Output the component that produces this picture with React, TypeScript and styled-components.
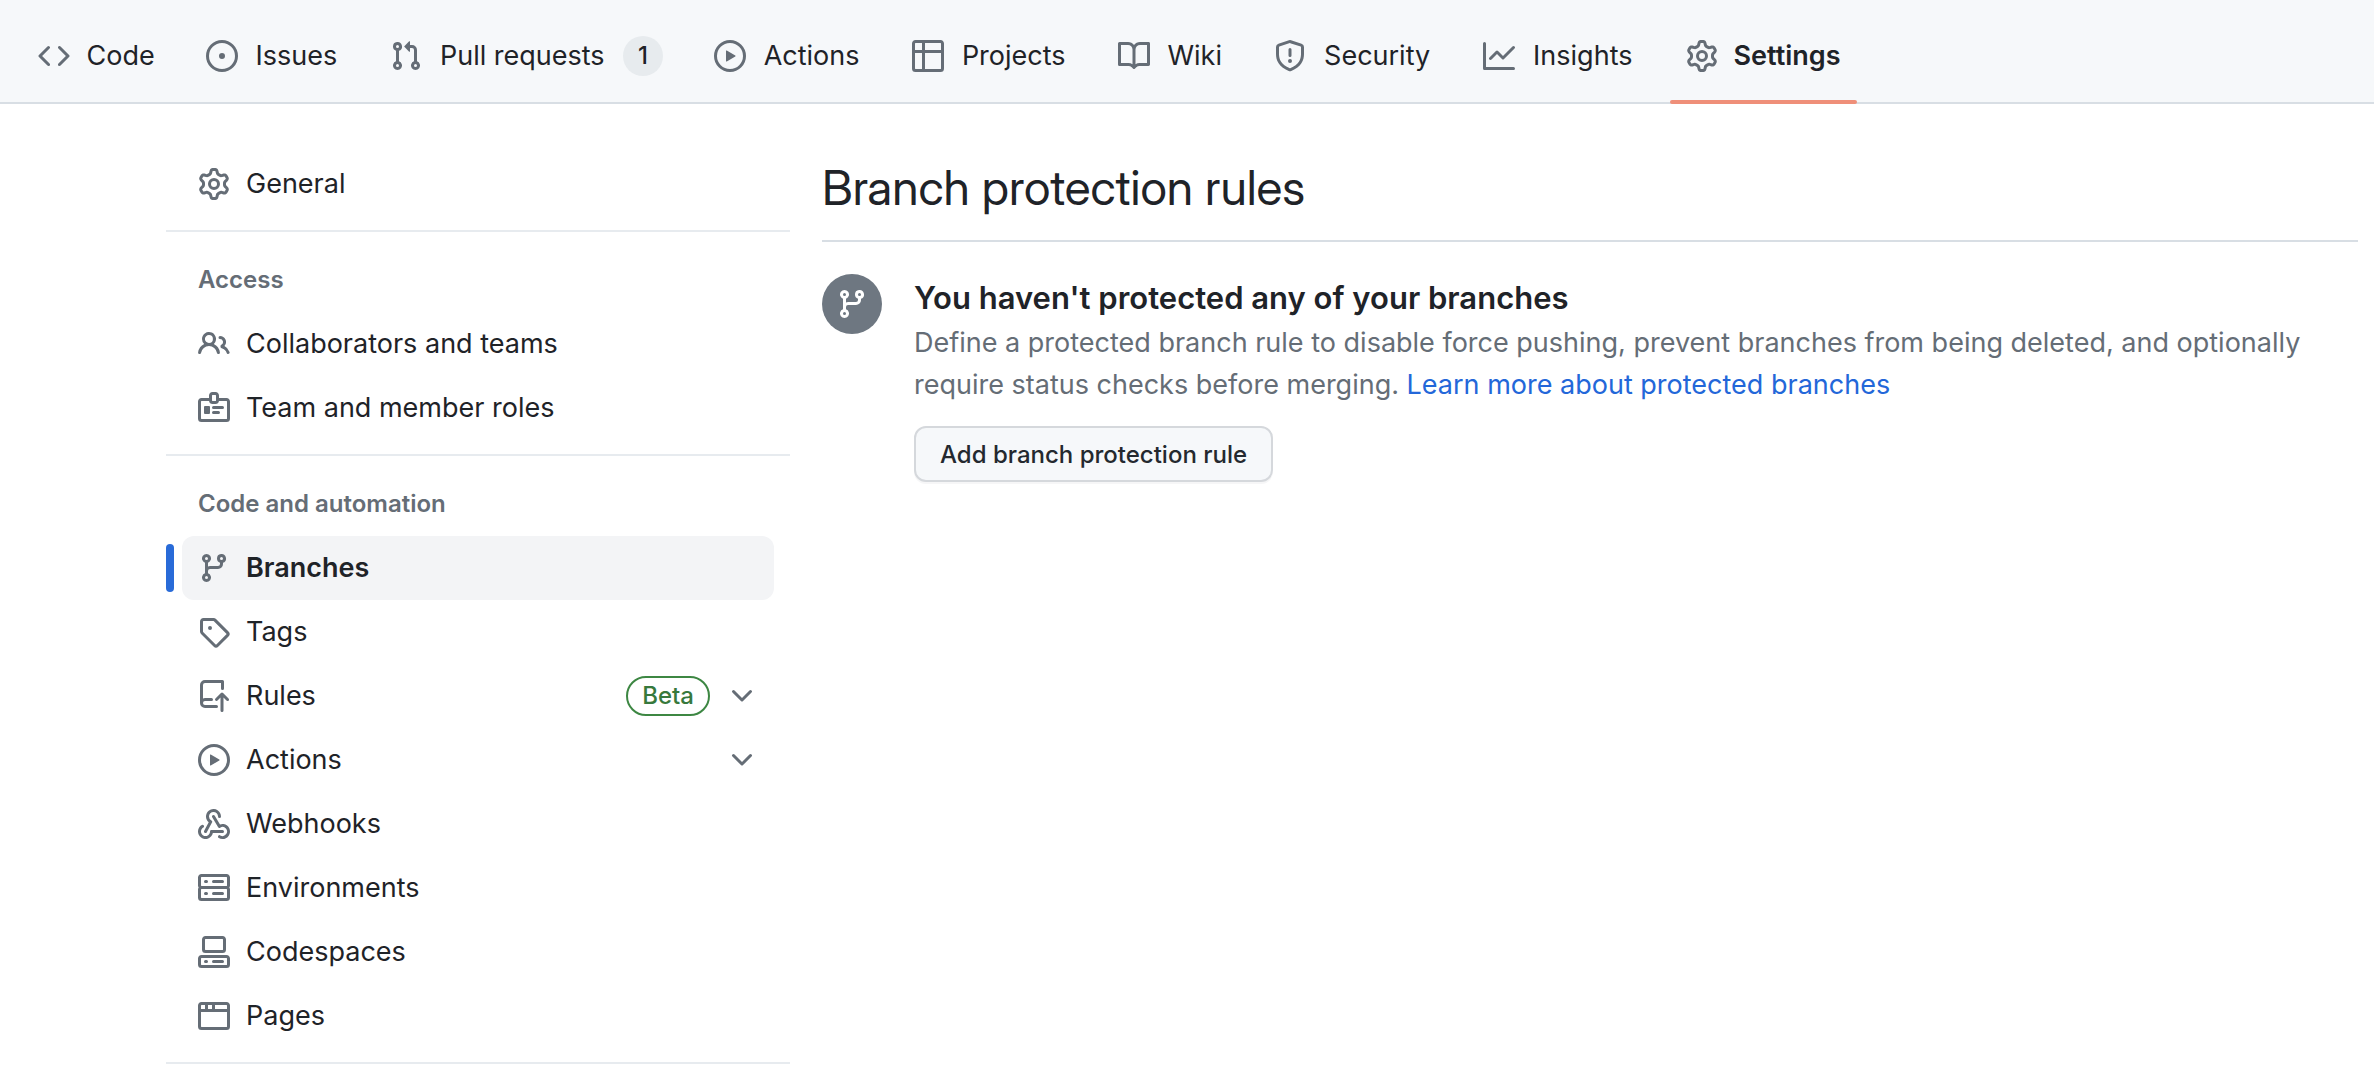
import React from "react";
import styled, { createGlobalStyle } from "styled-components";

const ICONS = {
  code: "m11.28 3.22 4.25 4.25a.75.75 0 0 1 0 1.06l-4.25 4.25a.749.749 0 0 1-1.275-.326.749.749 0 0 1 .215-.734L13.94 8l-3.72-3.72a.749.749 0 0 1 .326-1.275.749.749 0 0 1 .734.215Zm-6.56 0a.751.751 0 0 1 1.042.018.751.751 0 0 1 .018 1.042L2.06 8l3.72 3.72a.749.749 0 0 1-.326 1.275.749.749 0 0 1-.734-.215L.47 8.53a.75.75 0 0 1 0-1.06Z",
  issue: "M8 9.5a1.5 1.5 0 1 0 0-3 1.5 1.5 0 0 0 0 3ZM8 0a8 8 0 1 1 0 16A8 8 0 0 1 8 0ZM1.5 8a6.5 6.5 0 1 0 13 0 6.5 6.5 0 0 0-13 0Z",
  pull: "M1.5 3.25a2.25 2.25 0 1 1 3 2.122v5.256a2.251 2.251 0 1 1-1.5 0V5.372A2.25 2.25 0 0 1 1.5 3.25Zm5.677-.177L9.573.677A.25.25 0 0 1 10 .854V2.5h1A2.5 2.5 0 0 1 13.5 5v5.628a2.251 2.251 0 1 1-1.5 0V5a1 1 0 0 0-1-1h-1v1.646a.25.25 0 0 1-.427.177L7.177 3.427a.25.25 0 0 1 0-.354ZM3.75 2.5a.75.75 0 1 0 0 1.5.75.75 0 0 0 0-1.5Zm0 9.5a.75.75 0 1 0 0 1.5.75.75 0 0 0 0-1.5Zm8.25.75a.75.75 0 1 0 1.5 0 .75.75 0 0 0-1.5 0Z",
  play: "M8 0a8 8 0 1 1 0 16A8 8 0 0 1 8 0ZM1.5 8a6.5 6.5 0 1 0 13 0 6.5 6.5 0 0 0-13 0Zm4.879-2.773 4.264 2.559a.25.25 0 0 1 0 .428l-4.264 2.559A.25.25 0 0 1 6 10.559V5.442a.25.25 0 0 1 .379-.215Z",
  table: "M0 1.75C0 .784.784 0 1.75 0h12.5C15.216 0 16 .784 16 1.75v12.5A1.75 1.75 0 0 1 14.25 16H1.75A1.75 1.75 0 0 1 0 14.25ZM6.5 6.5v8h7.75a.25.25 0 0 0 .25-.25V6.5Zm8-1.5V1.75a.25.25 0 0 0-.25-.25H6.5V5Zm-13 1.5v7.75c0 .138.112.25.25.25H5v-8ZM5 5V1.5H1.75a.25.25 0 0 0-.25.25V5Z",
  book: "M0 1.75A.75.75 0 0 1 .75 1h4.253c1.227 0 2.317.59 3 1.501A3.743 3.743 0 0 1 11.006 1h4.245a.75.75 0 0 1 .75.75v10.5a.75.75 0 0 1-.75.75h-4.507a2.25 2.25 0 0 0-1.591.659l-.622.621a.75.75 0 0 1-1.06 0l-.622-.621A2.25 2.25 0 0 0 5.258 13H.75a.75.75 0 0 1-.75-.75Zm7.251 10.324.004-5.073-.002-2.253A2.25 2.25 0 0 0 5.003 2.5H1.5v9h3.757a3.75 3.75 0 0 1 1.994.574ZM8.755 4.75l-.004 7.322a3.752 3.752 0 0 1 1.992-.572H14.5v-9h-3.495a2.25 2.25 0 0 0-2.25 2.25Z",
  shield: "M7.467.133a1.748 1.748 0 0 1 1.066 0l5.25 1.68A1.75 1.75 0 0 1 15 3.48V7c0 1.566-.32 3.182-1.303 4.682-.983 1.498-2.585 2.813-5.032 3.855a1.697 1.697 0 0 1-1.33 0c-2.447-1.042-4.049-2.357-5.032-3.855C1.32 10.182 1 8.566 1 7V3.48a1.75 1.75 0 0 1 1.217-1.667Zm.61 1.429a.25.25 0 0 0-.153 0l-5.25 1.68a.25.25 0 0 0-.174.238V7c0 1.358.275 2.666 1.057 3.86.784 1.194 2.121 2.34 4.366 3.297a.196.196 0 0 0 .154 0c2.245-.956 3.582-2.104 4.366-3.298C13.225 9.666 13.5 8.36 13.5 7V3.48a.251.251 0 0 0-.174-.237l-5.25-1.68ZM8.75 4.75v3a.75.75 0 0 1-1.5 0v-3a.75.75 0 0 1 1.5 0ZM9 10.5a1 1 0 1 1-2 0 1 1 0 0 1 2 0Z",
  graph: "M1.5 1.75V13.5h13.75a.75.75 0 0 1 0 1.5H.75a.75.75 0 0 1-.75-.75V1.75a.75.75 0 0 1 1.5 0Zm14.28 2.53-5.25 5.25a.75.75 0 0 1-1.06 0L7 7.06 4.28 9.78a.751.751 0 0 1-1.042-.018.751.751 0 0 1-.018-1.042l3.25-3.25a.75.75 0 0 1 1.06 0L10 7.94l4.72-4.72a.751.751 0 0 1 1.042.018.751.751 0 0 1 .018 1.042Z",
  gear: "M8 0a8.2 8.2 0 0 1 .701.031C9.444.095 9.99.645 10.16 1.29l.288 1.107c.018.066.079.158.212.224.231.114.454.243.668.386.123.082.233.09.299.071l1.103-.303c.644-.176 1.392.021 1.82.63.27.385.506.792.704 1.218.315.675.111 1.422-.364 1.891l-.814.806c-.049.048-.098.147-.088.294.016.257.016.515 0 .772-.01.147.038.246.088.294l.814.806c.475.469.679 1.216.364 1.891a7.977 7.977 0 0 1-.704 1.217c-.428.61-1.176.807-1.82.63l-1.102-.302c-.067-.019-.177-.011-.3.071a5.909 5.909 0 0 1-.668.386c-.133.066-.194.158-.211.224l-.29 1.106c-.168.646-.715 1.196-1.458 1.26a8.006 8.006 0 0 1-1.402 0c-.743-.064-1.289-.614-1.458-1.26l-.289-1.106c-.018-.066-.079-.158-.212-.224a5.738 5.738 0 0 1-.668-.386c-.123-.082-.233-.09-.299-.071l-1.103.303c-.644.176-1.392-.021-1.82-.63a8.12 8.12 0 0 1-.704-1.218c-.315-.675-.111-1.422.363-1.891l.815-.806c.05-.048.098-.147.088-.294a6.214 6.214 0 0 1 0-.772c.01-.147-.038-.246-.088-.294l-.815-.806C.635 6.045.431 5.298.746 4.623a7.92 7.92 0 0 1 .704-1.217c.428-.61 1.176-.807 1.82-.63l1.102.302c.067.019.177.011.3-.071.214-.143.437-.272.668-.386.133-.066.194-.158.211-.224l.29-1.106C6.009.645 6.556.095 7.299.03 7.53.01 7.764 0 8 0Zm-.571 1.525c-.036.003-.108.036-.137.146l-.289 1.105c-.147.561-.549.967-.998 1.189-.173.086-.34.183-.5.29-.417.278-.97.423-1.529.27l-1.103-.303c-.109-.03-.175.016-.195.045-.22.312-.412.644-.573.99-.014.031-.021.11.059.19l.815.806c.411.406.562.957.53 1.456a4.709 4.709 0 0 0 0 .582c.032.499-.119 1.05-.53 1.456l-.815.806c-.081.08-.073.159-.059.19.162.346.353.677.573.989.02.03.085.076.195.046l1.102-.303c.56-.153 1.113-.008 1.53.27.161.107.328.204.501.29.447.222.85.629.997 1.189l.289 1.105c.029.109.101.143.137.146a6.6 6.6 0 0 0 1.142 0c.036-.003.108-.036.137-.146l.289-1.105c.147-.561.549-.967.998-1.189.173-.086.34-.183.5-.29.417-.278.97-.423 1.529-.27l1.103.303c.109.029.175-.016.195-.045.22-.313.411-.644.573-.99.014-.031.021-.11-.059-.19l-.815-.806c-.411-.406-.562-.957-.53-1.456a4.709 4.709 0 0 0 0-.582c-.032-.499.119-1.05.53-1.456l.815-.806c.081-.08.073-.159.059-.19a6.464 6.464 0 0 0-.573-.989c-.02-.03-.085-.076-.195-.046l-1.102.303c-.56.153-1.113.008-1.53-.27a4.44 4.44 0 0 0-.501-.29c-.447-.222-.85-.629-.997-1.189l-.289-1.105c-.029-.11-.101-.143-.137-.146a6.6 6.6 0 0 0-1.142 0ZM11 8a3 3 0 1 1-6 0 3 3 0 0 1 6 0ZM9.5 8a1.5 1.5 0 1 0-3.001.001A1.5 1.5 0 0 0 9.5 8Z",
  people: "M2 5.5a3.5 3.5 0 1 1 5.898 2.549 5.508 5.508 0 0 1 3.034 4.084.75.75 0 1 1-1.482.235 4 4 0 0 0-7.9 0 .75.75 0 0 1-1.482-.236A5.507 5.507 0 0 1 3.102 8.05 3.493 3.493 0 0 1 2 5.5ZM11 4a3.001 3.001 0 0 1 2.22 5.018 5.01 5.01 0 0 1 2.56 3.012.749.749 0 0 1-.885.954.752.752 0 0 1-.549-.514 3.507 3.507 0 0 0-2.522-2.372.75.75 0 0 1-.574-.73v-.352a.75.75 0 0 1 .416-.672A1.5 1.5 0 0 0 11 5.5.75.75 0 0 1 11 4Zm-5.5-.5a2 2 0 1 0-.001 3.999A2 2 0 0 0 5.5 3.5Z",
  badge: "M3 7.5a.5.5 0 0 1 .5-.5h2a.5.5 0 0 1 .5.5v3a.5.5 0 0 1-.5.5h-2a.5.5 0 0 1-.5-.5v-3Zm10 .25a.75.75 0 0 1-.75.75h-4.5a.75.75 0 0 1 0-1.5h4.5a.75.75 0 0 1 .75.75ZM10.25 11a.75.75 0 0 0 0-1.5h-2.5a.75.75 0 0 0 0 1.5h2.5ZM7.25 0h1.5c.966 0 1.75.784 1.75 1.75V3h3.75c.966 0 1.75.784 1.75 1.75v8.5A1.75 1.75 0 0 1 14.25 15H1.75A1.75 1.75 0 0 1 0 13.25v-8.5C0 3.784.784 3 1.75 3H5.5V1.75C5.5.784 6.284 0 7.25 0Zm3.232 4.5A1.75 1.75 0 0 1 8.75 6h-1.5a1.75 1.75 0 0 1-1.732-1.5H1.75a.25.25 0 0 0-.25.25v8.5c0 .138.112.25.25.25h12.5a.25.25 0 0 0 .25-.25v-8.5a.25.25 0 0 0-.25-.25ZM7 1.75v2.5c0 .138.112.25.25.25h1.5A.25.25 0 0 0 9 4.25v-2.5a.25.25 0 0 0-.25-.25h-1.5a.25.25 0 0 0-.25.25Z",
  branch: "M9.5 3.25a2.25 2.25 0 1 1 3 2.122V6A2.5 2.5 0 0 1 10 8.5H6a1 1 0 0 0-1 1v1.128a2.251 2.251 0 1 1-1.5 0V5.372a2.25 2.25 0 1 1 1.5 0v1.836A2.493 2.493 0 0 1 6 7h4a1 1 0 0 0 1-1v-.628A2.25 2.25 0 0 1 9.5 3.25Zm-6 0a.75.75 0 1 0 1.5 0 .75.75 0 0 0-1.5 0Zm8.25-.75a.75.75 0 1 0 0 1.5.75.75 0 0 0 0-1.5ZM4.25 12a.75.75 0 1 0 0 1.5.75.75 0 0 0 0-1.5Z",
  tag: "M1 7.775V2.75C1 1.784 1.784 1 2.75 1h5.025c.464 0 .91.184 1.238.513l6.25 6.25a1.75 1.75 0 0 1 0 2.474l-5.026 5.026a1.75 1.75 0 0 1-2.474 0l-6.25-6.25A1.752 1.752 0 0 1 1 7.775Zm1.5 0c0 .066.026.13.073.177l6.25 6.25a.25.25 0 0 0 .354 0l5.025-5.025a.25.25 0 0 0 0-.354l-6.25-6.25a.25.25 0 0 0-.177-.073H2.75a.25.25 0 0 0-.25.25ZM6 5a1 1 0 1 1 0 2 1 1 0 0 1 0-2Z",
  push: "M1 2.5A2.5 2.5 0 0 1 3.5 0h8.75a.75.75 0 0 1 .75.75v3.5a.75.75 0 0 1-1.5 0V1.5h-8a1 1 0 0 0-1 1v6.708A2.493 2.493 0 0 1 3.5 9h3.25a.75.75 0 0 1 0 1.5H3.5a1 1 0 0 0 0 2h5.75a.75.75 0 0 1 0 1.5H3.5A2.5 2.5 0 0 1 1 11.5Zm13.22 7.78-1.47-1.47v6.44a.75.75 0 0 1-1.5 0V8.81L9.78 10.28a.751.751 0 0 1-1.042-.018.751.751 0 0 1-.018-1.042l2.75-2.75a.75.75 0 0 1 1.06 0l2.75 2.75a.749.749 0 0 1-.326 1.275.749.749 0 0 1-.734-.215Z",
  chevron: "M12.78 5.22a.749.749 0 0 1 0 1.06l-4.25 4.25a.749.749 0 0 1-1.06 0L3.22 6.28a.749.749 0 1 1 1.06-1.06L8 8.939l3.72-3.719a.749.749 0 0 1 1.06 0Z",
  webhook: "M5.5 4.25a2.25 2.25 0 0 1 4.5 0 .75.75 0 0 0 1.5 0 3.75 3.75 0 1 0-6.14 2.889l-2.272 4.258a.75.75 0 0 0 1.324.706L7 7.25a.75.75 0 0 0-.309-1.015A2.25 2.25 0 0 1 5.5 4.25ZM7.364 3.607a.75.75 0 0 1 1.03.257l2.608 4.349a3.75 3.75 0 1 1-.628 6.785.75.75 0 0 1 .752-1.299 2.25 2.25 0 1 0-.033-3.88.75.75 0 0 1-1.03-.256L7.107 4.636a.75.75 0 0 1 .257-1.03ZM2.9 8.776A.75.75 0 0 1 2.625 9.8 2.25 2.25 0 1 0 6 11.75a.75.75 0 0 1 .75-.751h5.5a.75.75 0 0 1 0 1.5H7.425a3.751 3.751 0 1 1-5.55-3.998.75.75 0 0 1 1.024.274Z",
  server: "M1.75 1h12.5c.966 0 1.75.784 1.75 1.75v4c0 .372-.116.717-.314 1 .198.283.314.628.314 1v4a1.75 1.75 0 0 1-1.75 1.75H1.75A1.75 1.75 0 0 1 0 12.75v-4c0-.358.109-.707.314-1a1.739 1.739 0 0 1-.314-1v-4C0 1.784.784 1 1.75 1ZM1.5 2.75v4c0 .138.112.25.25.25h12.5a.25.25 0 0 0 .25-.25v-4a.25.25 0 0 0-.25-.25H1.75a.25.25 0 0 0-.25.25Zm.25 5.75a.25.25 0 0 0-.25.25v4c0 .138.112.25.25.25h12.5a.25.25 0 0 0 .25-.25v-4a.25.25 0 0 0-.25-.25ZM7 4.75A.75.75 0 0 1 7.75 4h4.5a.75.75 0 0 1 0 1.5h-4.5A.75.75 0 0 1 7 4.75ZM7.75 10h4.5a.75.75 0 0 1 0 1.5h-4.5a.75.75 0 0 1 0-1.5ZM3 4.75A.75.75 0 0 1 3.75 4h.5a.75.75 0 0 1 0 1.5h-.5A.75.75 0 0 1 3 4.75ZM3.75 10h.5a.75.75 0 0 1 0 1.5h-.5a.75.75 0 0 1 0-1.5Z",
  codespaces: "M0 11.25c0-.966.784-1.75 1.75-1.75h12.5c.966 0 1.75.784 1.75 1.75v3A1.75 1.75 0 0 1 14.25 16H1.75A1.75 1.75 0 0 1 0 14.25Zm2-9.5C2 .784 2.784 0 3.75 0h8.5C13.216 0 14 .784 14 1.75v5a1.75 1.75 0 0 1-1.75 1.75h-8.5A1.75 1.75 0 0 1 2 6.75Zm1.75-.25a.25.25 0 0 0-.25.25v5c0 .138.112.25.25.25h8.5a.25.25 0 0 0 .25-.25v-5a.25.25 0 0 0-.25-.25Zm-2 9.5a.25.25 0 0 0-.25.25v3c0 .138.112.25.25.25h12.5a.25.25 0 0 0 .25-.25v-3a.25.25 0 0 0-.25-.25ZM7 12.75a.75.75 0 0 1 .75-.75h4.5a.75.75 0 0 1 0 1.5h-4.5a.75.75 0 0 1-.75-.75Zm-4 0a.75.75 0 0 1 .75-.75h.5a.75.75 0 0 1 0 1.5h-.5a.75.75 0 0 1-.75-.75Z",
  browser: "M0 2.75C0 1.784.784 1 1.75 1h12.5c.966 0 1.75.784 1.75 1.75v10.5A1.75 1.75 0 0 1 14.25 15H1.75A1.75 1.75 0 0 1 0 13.25ZM14.5 6h-13v7.25c0 .138.112.25.25.25h12.5a.25.25 0 0 0 .25-.25Zm-6-3.5v2h6V2.75a.25.25 0 0 0-.25-.25ZM5 2.5v2h2v-2Zm-3.25 0a.25.25 0 0 0-.25.25V4.5h2v-2Z",
};

type IconName = keyof typeof ICONS;

const GlobalStyle = createGlobalStyle`
  *, *::before, *::after { box-sizing: border-box; }
  body {
    margin: 0;
    background: #ffffff;
    color: #1f2328;
    font-family: Inter, "Liberation Sans", sans-serif;
    font-size: 27px;
    line-height: 42px;
  }
`;

const Glyph = styled.svg`
  width: 32px;
  height: 32px;
  flex: none;
  display: block;
  fill: currentColor;
`;

const Icon = ({ name }: { name: IconName }) => (
  <Glyph viewBox="0 0 16 16" aria-hidden="true">
    <path fillRule="evenodd" d={ICONS[name]} />
  </Glyph>
);

const TopNav = styled.nav`
  display: flex;
  gap: 19px;
  padding: 10px 22px 0;
  background: #f6f8fa;
  border-bottom: 2px solid #d8dee4;
`;

const TabLink = styled.a<{ $active?: boolean }>`
  position: relative;
  display: flex;
  align-items: center;
  gap: 16px;
  height: 92px;
  padding: 0 16px;
  color: #1f2328;
  font-weight: ${(p) => (p.$active ? 600 : 400)};
  text-decoration: none;
  white-space: nowrap;

  svg { color: #656d76; }

  &::after {
    content: "";
    display: ${(p) => (p.$active ? "block" : "none")};
    position: absolute;
    left: 0;
    right: 0;
    bottom: -2px;
    height: 4px;
    border-radius: 2px;
    background: #ef8f79;
  }
`;

/* Reserves the width of the semibold label, so tabs keep their place when selected. */
const TabLabel = styled.span`
  display: flex;
  flex-direction: column;
  align-items: center;

  &::after {
    content: attr(data-label);
    height: 0;
    overflow: hidden;
    visibility: hidden;
    font-weight: 600;
  }
`;

const Counter = styled.span`
  min-width: 40px;
  height: 40px;
  border-radius: 20px;
  background: #e7ebee;
  font-size: 24px;
  font-weight: 500;
  line-height: 40px;
  text-align: center;
`;

const Page = styled.div`
  display: flex;
  align-items: flex-start;
  gap: 32px;
  padding: 48px 16px 10px 166px;
`;

const Sidebar = styled.nav`
  flex: 0 0 624px;
`;

const Group = styled.section`
  padding-bottom: 14px;
  border-bottom: 2px solid #e7ebef;
`;

const GroupTitle = styled.h2`
  margin: 0;
  padding: 32px 32px 16px;
  color: #656d76;
  font-size: 24px;
  font-weight: 600;
  line-height: 32px;
`;

const Items = styled.ul`
  margin: 0;
  padding: 0 16px;
  list-style: none;
`;

const itemBox = `
  position: relative;
  display: flex;
  align-items: center;
  gap: 16px;
  width: 100%;
  height: 64px;
  padding: 0 16px;
  border: 0;
  border-radius: 12px;
  color: #1f2328;
  font: inherit;
  text-align: left;
  text-decoration: none;
  cursor: pointer;

  svg { color: #656d76; }
`;

const ItemLink = styled.a<{ $active?: boolean }>`
  ${itemBox}
  background: ${(p) => (p.$active ? "#f3f4f6" : "transparent")};
  font-weight: ${(p) => (p.$active ? 600 : 400)};

  &::before {
    content: "";
    display: ${(p) => (p.$active ? "block" : "none")};
    position: absolute;
    top: 8px;
    bottom: 8px;
    left: -16px;
    width: 8px;
    border-radius: 4px;
    background: #296bd8;
  }
`;

const ItemToggle = styled.button`
  ${itemBox}
  background: transparent;
`;

const ItemLabel = styled.span`
  flex: 1;
`;

const Beta = styled.span`
  height: 40px;
  padding: 0 14px;
  border: 2px solid #3d8743;
  border-radius: 20px;
  color: #37793c;
  font-size: 24px;
  font-weight: 500;
  line-height: 36px;
`;

const Main = styled.main`
  flex: 1;
  min-width: 0;
`;

const Title = styled.h1`
  margin: 0;
  padding: 0 0 16px;
  border-bottom: 2px solid #d8dee4;
  font-family: "Inter Display", Inter, "Liberation Sans", sans-serif;
  font-size: 48px;
  font-weight: 400;
  line-height: 72px;
`;

const Blank = styled.section`
  display: flex;
  align-items: flex-start;
  gap: 32px;
  padding-top: 32px;
`;

const RoundBadge = styled.div`
  display: flex;
  align-items: center;
  justify-content: center;
  flex: none;
  width: 60px;
  height: 60px;
  border-radius: 50%;
  background: #6e7781;
  color: #ffffff;
`;

const BlankTitle = styled.h3`
  margin: 0;
  font-size: 31px;
  font-weight: 600;
  line-height: 48px;
`;

const BlankText = styled.p`
  margin: 0 0 20px;
  color: #656d76;
`;

const TextLink = styled.a`
  color: #2367d9;
  text-decoration: none;
`;

const Button = styled.button`
  display: block;
  height: 56px;
  padding: 0 24px;
  border: 2px solid #d5d8dc;
  border-radius: 12px;
  background: #f6f8fa;
  box-shadow: 0 2px 0 rgba(31, 35, 40, 0.04);
  color: #24292f;
  font-family: inherit;
  font-size: 24px;
  font-weight: 500;
  cursor: pointer;
`;

const tabs: { icon: IconName; label: string; count?: number; active?: boolean }[] = [
  { icon: "code", label: "Code" },
  { icon: "issue", label: "Issues" },
  { icon: "pull", label: "Pull requests", count: 1 },
  { icon: "play", label: "Actions" },
  { icon: "table", label: "Projects" },
  { icon: "book", label: "Wiki" },
  { icon: "shield", label: "Security" },
  { icon: "graph", label: "Insights" },
  { icon: "gear", label: "Settings", active: true },
];

type Item = { icon: IconName; label: string; active?: boolean; beta?: boolean; expands?: boolean };

const groups: { title?: string; items: Item[] }[] = [
  { items: [{ icon: "gear", label: "General" }] },
  {
    title: "Access",
    items: [
      { icon: "people", label: "Collaborators and teams" },
      { icon: "badge", label: "Team and member roles" },
    ],
  },
  {
    title: "Code and automation",
    items: [
      { icon: "branch", label: "Branches", active: true },
      { icon: "tag", label: "Tags" },
      { icon: "push", label: "Rules", beta: true, expands: true },
      { icon: "play", label: "Actions", expands: true },
      { icon: "webhook", label: "Webhooks" },
      { icon: "server", label: "Environments" },
      { icon: "codespaces", label: "Codespaces" },
      { icon: "browser", label: "Pages" },
    ],
  },
];

const SidebarItem = ({ item }: { item: Item }) => (
  <li>
    {item.expands ? (
      <ItemToggle type="button" aria-expanded={false}>
        <Icon name={item.icon} />
        <ItemLabel>{item.label}</ItemLabel>
        {item.beta && <Beta>Beta</Beta>}
        <Icon name="chevron" />
      </ItemToggle>
    ) : (
      <ItemLink href="#" $active={item.active} aria-current={item.active ? "page" : undefined}>
        <Icon name={item.icon} />
        <ItemLabel>{item.label}</ItemLabel>
      </ItemLink>
    )}
  </li>
);

export default function App() {
  return (
    <>
      <GlobalStyle />
      <TopNav aria-label="Repository">
        {tabs.map((tab) => (
          <TabLink key={tab.label} href="#" $active={tab.active} aria-current={tab.active ? "page" : undefined}>
            <Icon name={tab.icon} />
            <TabLabel data-label={tab.label}>{tab.label}</TabLabel>
            {tab.count !== undefined && <Counter>{tab.count}</Counter>}
          </TabLink>
        ))}
      </TopNav>
      <Page>
        <Sidebar aria-label="Repository settings">
          {groups.map((group, index) => (
            <Group key={index}>
              {group.title && <GroupTitle>{group.title}</GroupTitle>}
              <Items>
                {group.items.map((item) => (
                  <SidebarItem key={item.label} item={item} />
                ))}
              </Items>
            </Group>
          ))}
        </Sidebar>
        <Main>
          <Title>Branch protection rules</Title>
          <Blank>
            <RoundBadge>
              <Icon name="branch" />
            </RoundBadge>
            <div>
              <BlankTitle>You haven't protected any of your branches</BlankTitle>
              <BlankText>
                Define a protected branch rule to disable force pushing, prevent branches from being deleted, and
                optionally require status checks before merging.{" "}
                <TextLink href="#">Learn more about protected branches</TextLink>
              </BlankText>
              <Button type="button">Add branch protection rule</Button>
            </div>
          </Blank>
        </Main>
      </Page>
    </>
  );
}
